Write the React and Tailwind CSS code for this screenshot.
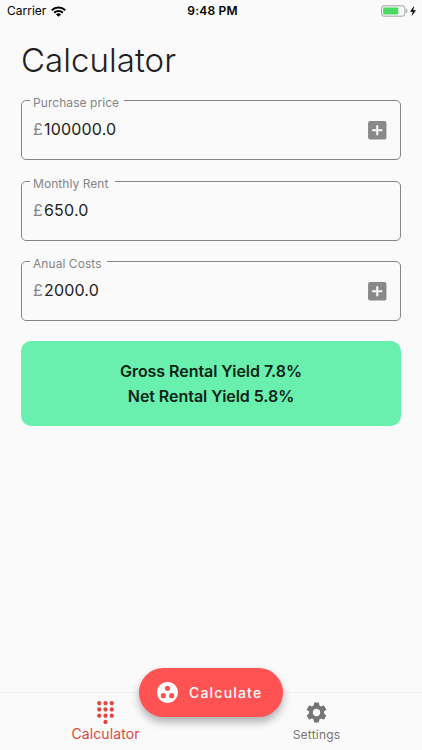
import { useState } from "react";
import { MdAddBox, MdDialpad, MdGroupWork, MdSettings } from "react-icons/md";

const fields = [
  { id: "price", label: "Purchase price", expandable: true, labelWidth: "w-[94px]" },
  { id: "rent", label: "Monthly Rent", expandable: false, labelWidth: "w-[85px]" },
  { id: "costs", label: "Anual Costs", expandable: true, labelWidth: "w-[77px]" },
];

function StatusBar() {
  return (
    <div className="grid h-[22px] grid-cols-3 items-center pl-[7px] pr-[5px] text-black">
      <div className="flex items-center gap-[5px]">
        <span className="text-[12px] leading-none">Carrier</span>
        <svg width="15" height="11" viewBox="0 0 15 11" fill="none" stroke="currentColor" strokeWidth="2">
          <path d="M0.8 4.2A9.6 9.6 0 0 1 14.2 4.2" />
          <path d="M3.2 6.7A6.2 6.2 0 0 1 11.8 6.7" />
          <path d="M7.5 10.8L5 8.4A3.6 3.6 0 0 1 10 8.4Z" fill="currentColor" stroke="none" />
        </svg>
      </div>
      <span className="pl-px text-center text-[12px] font-semibold leading-none tracking-[0.2px]">9:48 PM</span>
      <div className="flex items-center justify-end">
        <svg width="37" height="12" viewBox="0 0 37 12">
          <rect x="1.5" y="0.8" width="23.4" height="10.4" rx="2.5" fill="none" stroke="#a2a2a2" />
          <rect x="3.1" y="2.4" width="15.2" height="7.2" rx="0.8" fill="#4cd964" />
          <path d="M26 4v4c1-.4 1.4-1.1 1.4-2s-.4-1.6-1.4-2z" fill="#a2a2a2" />
          <path d="M34.2 0.8L30 6.7h2.7L31.5 11.2L36 5.2h-2.8z" fill="#000" />
        </svg>
      </div>
    </div>
  );
}

function MoneyField({ field, value, onChange }) {
  return (
    <div className="relative flex h-[60px] items-start rounded-[5px] border border-[#858585] pl-[11px] pr-[11px] pt-[16px]">
      <label
        htmlFor={field.id}
        className={`absolute -top-[8px] left-[8px] whitespace-nowrap bg-[#fafafa] pl-[3px] text-[12px] leading-[20px] tracking-[0.06px] text-[#858585] ${field.labelWidth}`}
      >
        {field.label}
      </label>
      <span className="w-[11px] text-[16px] leading-[24px] text-[#858585]">£</span>
      <input
        id={field.id}
        value={value}
        onChange={(e) => onChange(field.id, e.target.value)}
        className="min-w-0 flex-1 bg-transparent text-[16px] leading-[24px] tracking-[0.18px] text-[#212121] outline-none"
      />
      {field.expandable && (
        <button type="button" aria-label={`Add to ${field.label}`} className="pt-px text-[#898989]">
          <MdAddBox size={24.5} />
        </button>
      )}
    </div>
  );
}

export default function App() {
  const [values, setValues] = useState({ price: "100000.0", rent: "650.0", costs: "2000.0" });

  const annualRent = Number(values.rent) * 12;
  const price = Number(values.price) || 1;
  const gross = ((annualRent / price) * 100).toFixed(1);
  const net = (((annualRent - Number(values.costs)) / price) * 100).toFixed(1);

  const handleChange = (id, value) => setValues((current) => ({ ...current, [id]: value }));

  return (
    <div className="flex h-[750px] w-[422px] flex-col overflow-hidden bg-[#fafafa] font-['Inter',sans-serif]">
      <StatusBar />

      <main className="flex-1 px-[21px] pt-[17px]">
        <h1 className="text-[33px] font-[340] leading-[42px] tracking-[0.05px] text-[#212121]">Calculator</h1>

        <div className="mt-[19px] flex flex-col gap-[20.5px]">
          {fields.map((field) => (
            <MoneyField key={field.id} field={field} value={values[field.id]} onChange={handleChange} />
          ))}
        </div>

        <section className="mt-[20px] flex h-[85px] flex-col items-center justify-center rounded-[10px] bg-[#69f0ae] text-[16px] font-semibold leading-[24.5px] tracking-[-0.05px] text-[#0b2417]">
          <p>Gross Rental Yield {gross}%</p>
          <p>Net Rental Yield {net}%</p>
        </section>
      </main>

      <nav className="relative grid h-[58px] grid-cols-2 border-t border-[#f0f0f0]">
        <button type="button" className="flex flex-col items-center pt-[7px] text-[#de473d]">
          <MdDialpad size={25} />
          <span className="text-[14px] leading-[17px] tracking-[0.1px]">Calculator</span>
        </button>
        <button type="button" className="flex flex-col items-center pt-[7px] text-[#757575]">
          <MdSettings size={25} />
          <span className="text-[12px] leading-[19px] tracking-[0.2px]">Settings</span>
        </button>

        <button
          type="button"
          className="absolute -top-[25px] left-[139px] flex h-[49px] w-[144px] items-center rounded-full bg-[#ff5252] pl-[16px] text-white shadow-[0_5px_8px_rgba(0,0,0,0.3)]"
        >
          <MdGroupWork size={25} />
          <span className="ml-[9px] text-[14px] font-medium tracking-[1.2px]">Calculate</span>
        </button>
      </nav>
    </div>
  );
}
